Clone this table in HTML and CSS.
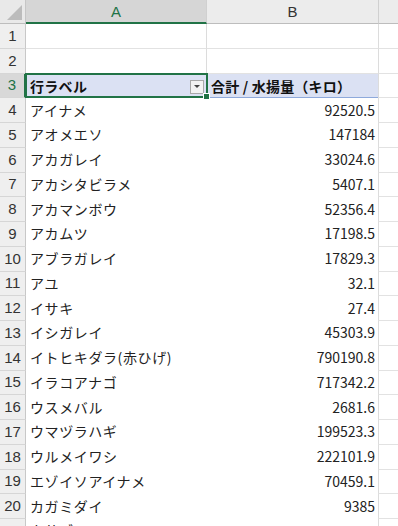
FILE: index.html
```html
<!DOCTYPE html>
<html lang="ja">
<head>
<meta charset="utf-8">
<link rel="stylesheet" href="styles.css">
</head>
<body>
<div class="sheet">
  <div class="corner"><span class="tri"></span></div>
  <div class="colhead sel">A</div>
  <div class="colhead">B</div>
  <div class="colhead rest"></div>

  <div class="rownum">1</div><div class="cell grid"></div><div class="cell grid"></div><div class="cell gridc"></div>
  <div class="rownum">2</div><div class="cell grid"></div><div class="cell grid"></div><div class="cell gridc"></div>
  <div class="rownum selrow">3</div>
  <div class="cell pvh pva"><span>行ラベル</span><span class="dd"><span class="ddtri"></span></span><span class="selbox"></span><span class="handle"></span></div>
  <div class="cell pvh pvb">合計 / 水揚量（キロ）</div>
  <div class="cell gridc"></div>

  <div class="rownum">4</div><div class="cell lab">アイナメ</div><div class="cell num">92520.5</div><div class="cell gridc"></div>
  <div class="rownum">5</div><div class="cell lab">アオメエソ</div><div class="cell num">147184</div><div class="cell gridc"></div>
  <div class="rownum">6</div><div class="cell lab">アカガレイ</div><div class="cell num">33024.6</div><div class="cell gridc"></div>
  <div class="rownum">7</div><div class="cell lab">アカシタビラメ</div><div class="cell num">5407.1</div><div class="cell gridc"></div>
  <div class="rownum">8</div><div class="cell lab">アカマンボウ</div><div class="cell num">52356.4</div><div class="cell gridc"></div>
  <div class="rownum">9</div><div class="cell lab">アカムツ</div><div class="cell num">17198.5</div><div class="cell gridc"></div>
  <div class="rownum">10</div><div class="cell lab">アブラガレイ</div><div class="cell num">17829.3</div><div class="cell gridc"></div>
  <div class="rownum">11</div><div class="cell lab">アユ</div><div class="cell num">32.1</div><div class="cell gridc"></div>
  <div class="rownum">12</div><div class="cell lab">イサキ</div><div class="cell num">27.4</div><div class="cell gridc"></div>
  <div class="rownum">13</div><div class="cell lab">イシガレイ</div><div class="cell num">45303.9</div><div class="cell gridc"></div>
  <div class="rownum">14</div><div class="cell lab">イトヒキダラ(赤ひげ)</div><div class="cell num">790190.8</div><div class="cell gridc"></div>
  <div class="rownum">15</div><div class="cell lab">イラコアナゴ</div><div class="cell num">717342.2</div><div class="cell gridc"></div>
  <div class="rownum">16</div><div class="cell lab">ウスメバル</div><div class="cell num">2681.6</div><div class="cell gridc"></div>
  <div class="rownum">17</div><div class="cell lab">ウマヅラハギ</div><div class="cell num">199523.3</div><div class="cell gridc"></div>
  <div class="rownum">18</div><div class="cell lab">ウルメイワシ</div><div class="cell num">222101.9</div><div class="cell gridc"></div>
  <div class="rownum">19</div><div class="cell lab">エゾイソアイナメ</div><div class="cell num">70459.1</div><div class="cell gridc"></div>
  <div class="rownum">20</div><div class="cell lab">カガミダイ</div><div class="cell num">9385</div><div class="cell gridc"></div>
  <div class="rownum"></div><div class="cell lab">カサゴ</div><div class="cell num"></div><div class="cell gridc"></div>
</div>
</body>
</html>
```
FILE: styles.css
```css
html, body {
  margin: 0;
  padding: 0;
  background: #ffffff;
  overflow: hidden;
}
.sheet {
  display: grid;
  grid-template-columns: 26px 181px 172px 1fr;
  grid-template-rows: 24px;
  grid-auto-rows: 24.75px;
  width: 398px;
  font-family: "Noto Sans CJK JP", "Noto Sans", sans-serif;
  font-size: 14px;
  color: #222222;
}
.sheet > div {
  box-sizing: border-box;
  min-width: 0;
  overflow: visible;
  white-space: nowrap;
}
.corner {
  position: relative;
  background: #e9e9e9;
  border-right: 1px solid #c6c6c6;
  border-bottom: 1px solid #bdbdbd;
}
.tri {
  position: absolute;
  right: 3px;
  bottom: 3px;
  width: 0;
  height: 0;
  border-left: 15px solid transparent;
  border-bottom: 15px solid #bcbcbc;
}
.colhead {
  background: #ececec;
  border-right: 1px solid #d0d0d0;
  border-bottom: 1px solid #bdbdbd;
  display: flex;
  align-items: center;
  justify-content: center;
  font-family: "Liberation Sans", "Noto Sans", sans-serif;
  font-size: 15px;
  color: #333333;
}
.colhead.sel {
  background: #d6d6d6;
  color: #217346;
  border-bottom: 2px solid #217346;
}
.colhead.rest {
  border-right: none;
}
.rownum {
  background: #efefef;
  border-right: 1px solid #c8c8c8;
  border-bottom: 1px solid #d6d6d6;
  display: flex;
  align-items: center;
  justify-content: center;
  font-family: "Liberation Sans", "Noto Sans", sans-serif;
  font-size: 15px;
  color: #333333;
  padding-bottom: 1px;
}
.rownum.selrow {
  background: #d8d8d8;
  color: #217346;
  border-right: 2px solid #217346;
}
.cell {
  display: flex;
  align-items: center;
}
.grid {
  border-right: 1px solid #dcdcdc;
  border-bottom: 1px solid #e2e2e2;
}
.gridc {
  border-left: 1px solid #dcdcdc;
  border-bottom: 1px solid #e2e2e2;
}
.sheet > .gridc { margin-left: -1px; }
.pvh {
  background: #dbe1f3;
  border-bottom: 1px solid #8ea9db;
  font-weight: 700;
  padding-left: 4px;
  color: #111111;
}
.pva {
  position: relative;
  padding-left: 4px;
  padding-top: 2px;
  letter-spacing: 0.3px;
}
.pvb {
  padding-left: 4px;
  padding-top: 2px;
  letter-spacing: 0.2px;
}
.dd {
  position: absolute;
  right: 3px;
  top: 6px;
  width: 14px;
  height: 14px;
  box-sizing: border-box;
  background: #f3f3f3;
  border: 1px solid #a9a9a9;
  display: flex;
  align-items: center;
  justify-content: center;
}
.ddtri {
  width: 0;
  height: 0;
  border-left: 3px solid transparent;
  border-right: 3px solid transparent;
  border-top: 3px solid #444444;
}
.selbox {
  position: absolute;
  left: -1px;
  top: -1px;
  right: -1px;
  bottom: -1px;
  border: 2px solid #217346;
  pointer-events: none;
}
.handle {
  position: absolute;
  right: -3px;
  bottom: -3px;
  width: 5px;
  height: 5px;
  background: #217346;
  border: 1px solid #ffffff;
}
.lab {
  padding-left: 4px;
  padding-bottom: 2px;
  letter-spacing: 0.6px;
}
.num {
  justify-content: flex-end;
  padding-right: 3px;
  padding-bottom: 2px;
  border-right: 1px solid #dcdcdc;
}
```
